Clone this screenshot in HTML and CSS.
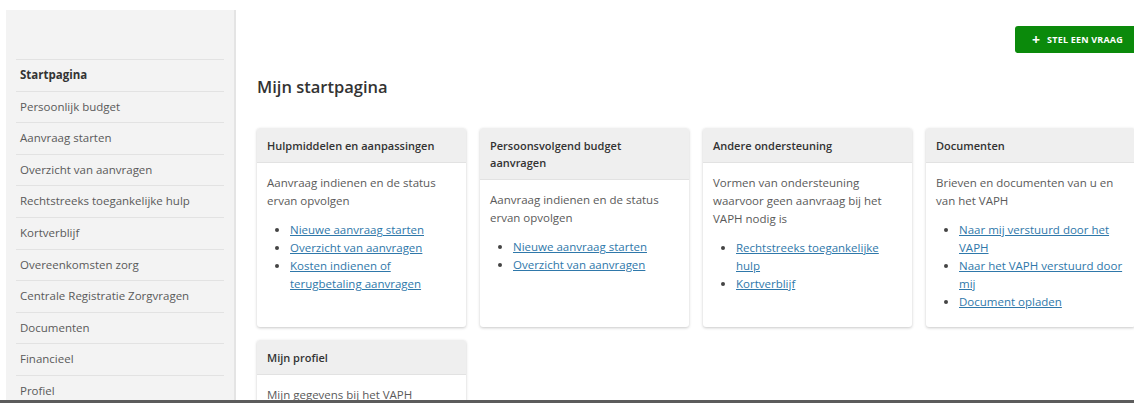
FILE: index.html
```html
<!DOCTYPE html>
<html lang="nl">
<head>
<meta charset="utf-8">
<title>Mijn startpagina</title>
<link rel="stylesheet" href="styles.css">
</head>
<body>
<div class="page">
  <aside class="sidebar">
    <div class="brand"></div>
    <nav class="nav">
      <a class="nav-item active" href="#">Startpagina</a>
      <a class="nav-item" href="#">Persoonlijk budget</a>
      <a class="nav-item" href="#">Aanvraag starten</a>
      <a class="nav-item" href="#">Overzicht van aanvragen</a>
      <a class="nav-item" href="#">Rechtstreeks toegankelijke hulp</a>
      <a class="nav-item" href="#">Kortverblijf</a>
      <a class="nav-item" href="#">Overeenkomsten zorg</a>
      <a class="nav-item" href="#">Centrale Registratie Zorgvragen</a>
      <a class="nav-item" href="#">Documenten</a>
      <a class="nav-item" href="#">Financieel</a>
      <a class="nav-item" href="#">Profiel</a>
    </nav>
  </aside>
  <main class="main">
    <div class="toolbar">
      <button class="btn-primary" type="button"><span class="plus">+</span>STEL EEN VRAAG</button>
    </div>
    <h1 class="title">Mijn startpagina</h1>
    <div class="cards">
      <section class="card">
        <h2 class="card-head">Hulpmiddelen en aanpassingen</h2>
        <div class="card-body">
          <p>Aanvraag indienen en de status ervan opvolgen</p>
          <ul>
            <li><a href="#">Nieuwe aanvraag starten</a></li>
            <li><a href="#">Overzicht van aanvragen</a></li>
            <li><a href="#">Kosten indienen of terugbetaling aanvragen</a></li>
          </ul>
        </div>
      </section>
      <section class="card">
        <h2 class="card-head">Persoonsvolgend budget aanvragen</h2>
        <div class="card-body">
          <p>Aanvraag indienen en de status ervan opvolgen</p>
          <ul>
            <li><a href="#">Nieuwe aanvraag starten</a></li>
            <li><a href="#">Overzicht van aanvragen</a></li>
          </ul>
        </div>
      </section>
      <section class="card">
        <h2 class="card-head">Andere ondersteuning</h2>
        <div class="card-body">
          <p>Vormen van ondersteuning waarvoor geen aanvraag bij het VAPH nodig is</p>
          <ul>
            <li><a href="#">Rechtstreeks toegankelijke hulp</a></li>
            <li><a href="#">Kortverblijf</a></li>
          </ul>
        </div>
      </section>
      <section class="card">
        <h2 class="card-head">Documenten</h2>
        <div class="card-body">
          <p>Brieven en documenten van u en van het VAPH</p>
          <ul>
            <li><a href="#">Naar mij verstuurd door het VAPH</a></li>
            <li><a href="#">Naar het VAPH verstuurd door mij</a></li>
            <li><a href="#">Document opladen</a></li>
          </ul>
        </div>
      </section>
      <section class="card">
        <h2 class="card-head">Mijn profiel</h2>
        <div class="card-body">
          <p>Mijn gegevens bij het VAPH</p>
        </div>
      </section>
    </div>
  </main>
</div>
</body>
</html>
```

FILE: styles.css
```css
* { box-sizing: border-box; }

html, body {
  margin: 0;
  padding: 0;
  background: #fff;
}

body {
  font-family: "Open Sans", "Noto Sans", sans-serif;
  color: #555;
}

.page {
  display: flex;
  height: 403px;
  overflow: hidden;
  border-bottom: 3px solid #5c5c5c;
}

/* left navigation */
.sidebar {
  width: 230px;
  flex: none;
  margin: 10px 0 0 6px;
  background: #f3f3f3;
  border-right: 2px solid #e4e4e4;
}

.brand {
  height: 49px;
}

.nav {
  display: flex;
  flex-direction: column;
  margin: 0 10px;
}

.nav-item {
  display: block;
  height: 31.6px;
  padding: 7px 4px 0;
  border-top: 1px solid #e2e2e2;
  font-size: 11.5px;
  line-height: 16px;
  color: #5a5a5a;
  text-decoration: none;
  white-space: nowrap;
}

.nav-item.active {
  color: #333;
  font-weight: 700;
}

/* content */
.main {
  flex: 1;
  min-width: 0;
  padding: 26px 0 0 21px;
}

.toolbar {
  display: flex;
  justify-content: flex-end;
}

.btn-primary {
  display: flex;
  align-items: center;
  gap: 7px;
  height: 27px;
  padding: 0 11px 0 17px;
  border: 0;
  border-radius: 3px 0 0 3px;
  background: #0b8a0b;
  color: #fff;
  font-family: inherit;
  font-size: 9px;
  font-weight: 700;
  letter-spacing: 0.2px;
}

.btn-primary .plus {
  font-size: 14px;
  font-weight: 700;
  line-height: 1;
}

.title {
  margin: 23px 0 30px;
  font-size: 16.5px;
  line-height: 22px;
  font-weight: 600;
  color: #333;
}

.cards {
  display: grid;
  grid-template-columns: repeat(4, 209px);
  gap: 13px 14px;
}

.card {
  background: #fff;
  border-radius: 3px;
  box-shadow: 0 1px 3px rgba(0, 0, 0, 0.22);
  overflow: hidden;
}

.card-head {
  margin: 0;
  padding: 9px 12px 8px 10px;
  background: #efefef;
  border-bottom: 1px solid #e2e2e2;
  font-size: 11px;
  line-height: 17px;
  font-weight: 600;
  color: #333;
}

.card-body {
  padding: 11px 10px 16px;
  font-size: 11.5px;
  line-height: 18px;
}

.card-body p {
  margin: 0;
  color: #5a5a5a;
}

.card-body ul {
  margin: 11px 0 0;
  padding-left: 23px;
}

.card-body li::marker {
  color: #444;
}

.card-body a {
  color: #2f78aa;
  text-decoration: underline;
}
```
